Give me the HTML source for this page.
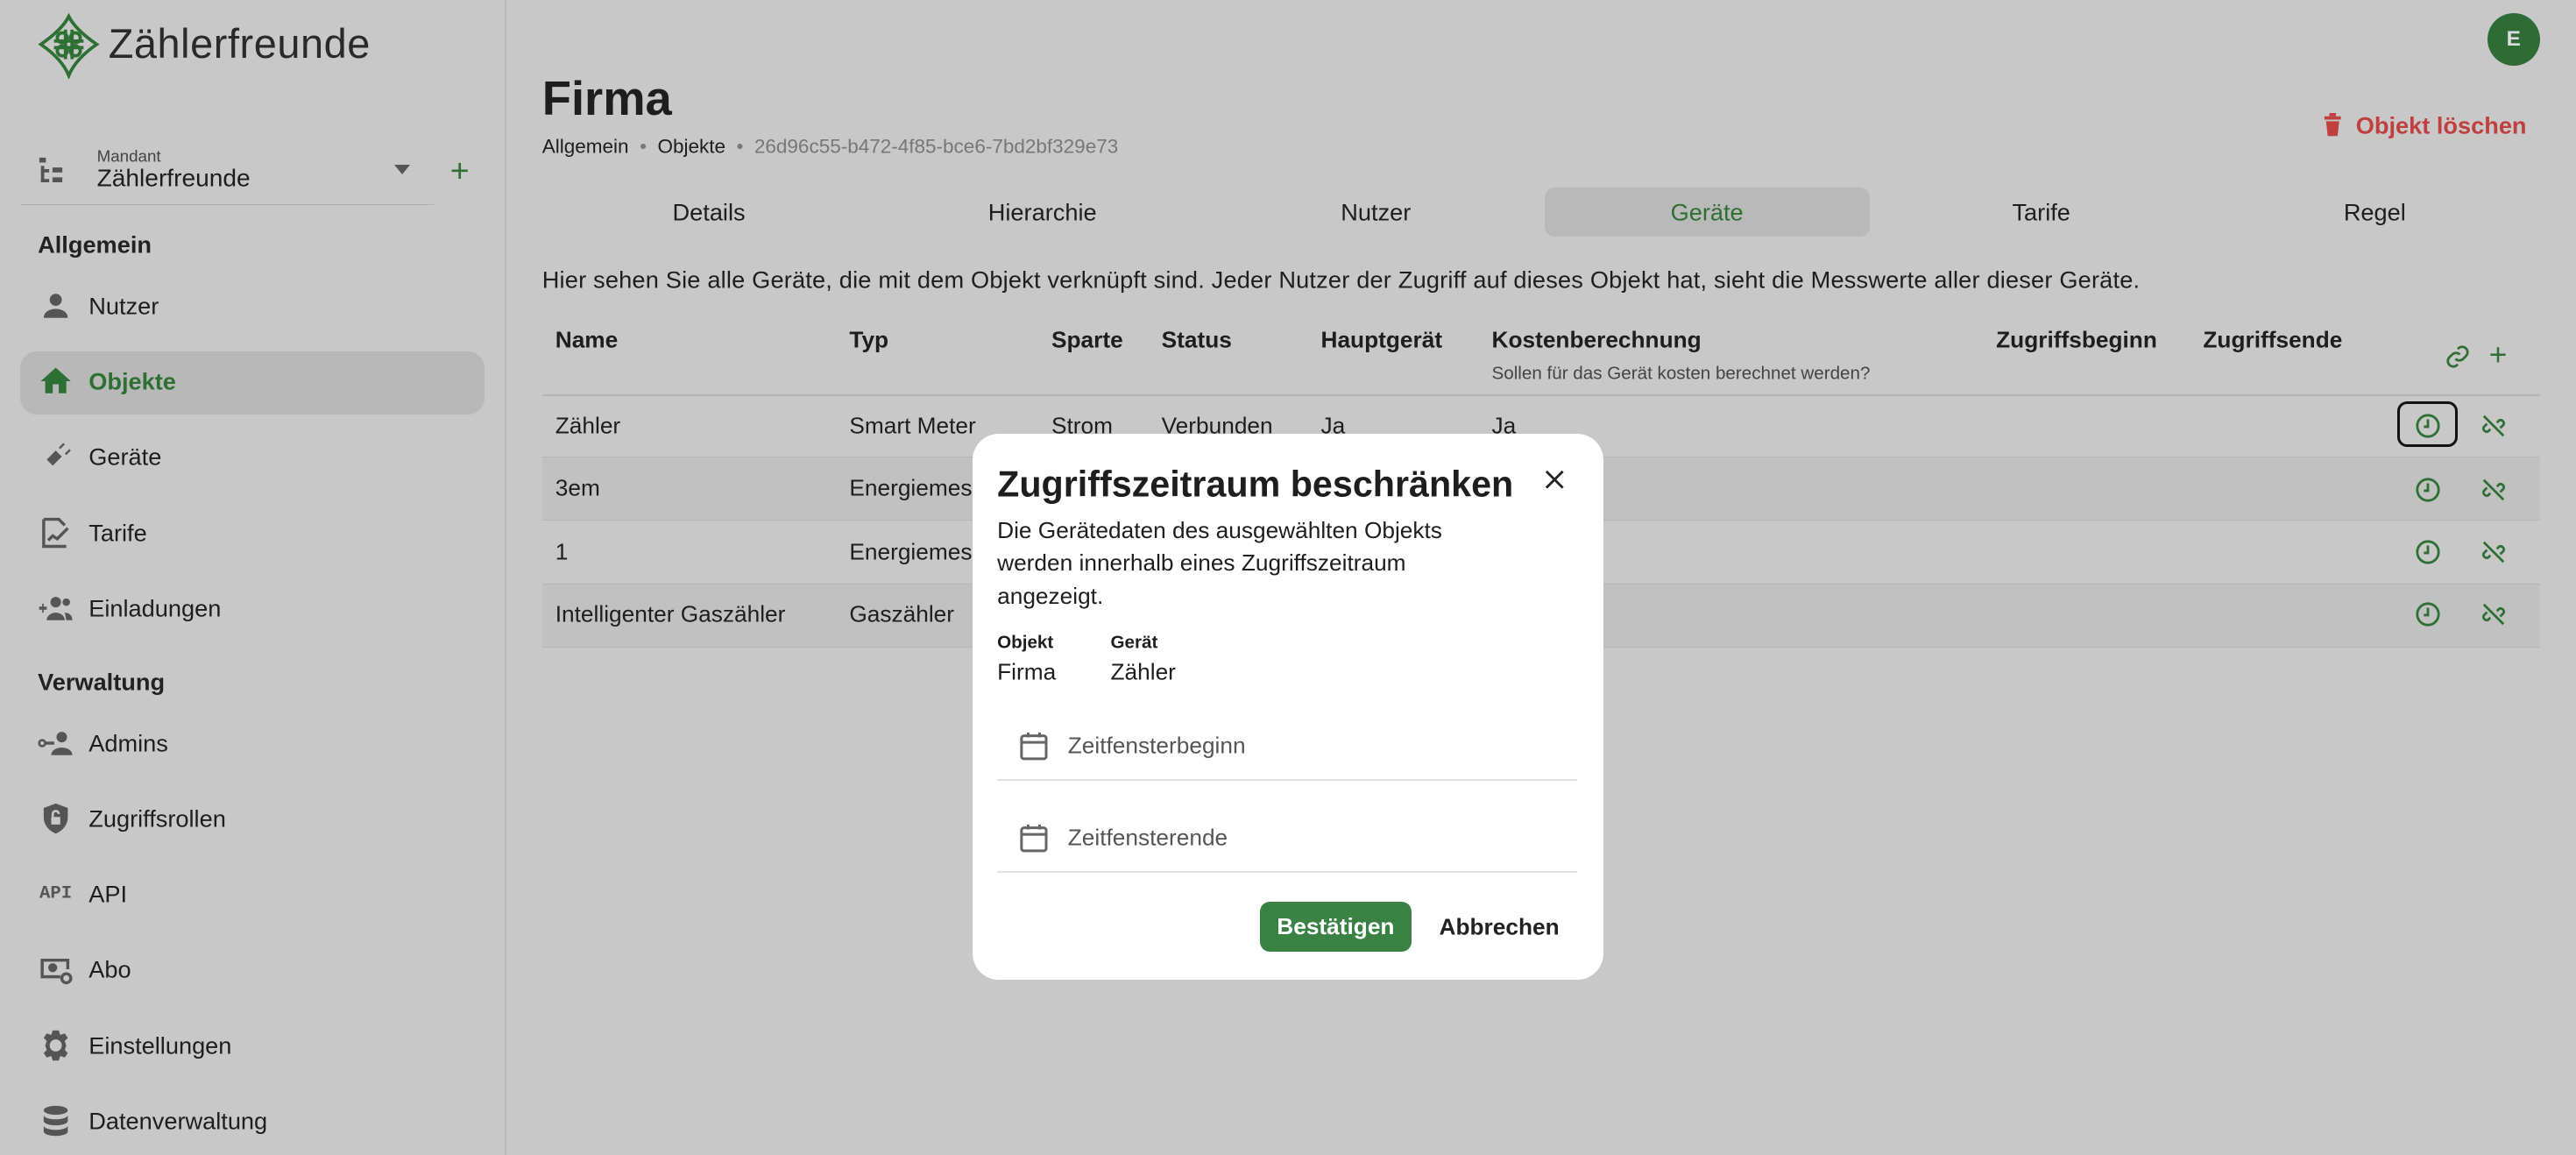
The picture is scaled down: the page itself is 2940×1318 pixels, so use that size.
<!DOCTYPE html>
<html><head><meta charset="utf-8"><style>
html,body{margin:0;padding:0;width:2940px;height:1318px;overflow:hidden;background:#c8c8c8}
#w{position:absolute;left:0;top:0;width:1568px;height:703px;zoom:1.875;font-family:"Liberation Sans",sans-serif;color:#1e1e1e;background:#c8c8c8}
.a{position:absolute;white-space:nowrap}
.t{position:absolute;white-space:nowrap;line-height:20px;transform:translateY(-10px)}
.nav{font-size:14.5px;left:54px}
.ic{position:absolute;left:23px;width:22px;height:22px;transform:translateY(-11px)}
.th{font-weight:bold;font-size:14px}
.td{font-size:14px}
</style></head><body><div id="w">
<!-- sidebar -->
<div class="a" style="left:307px;top:0;width:1px;height:703px;background:#b8b8b8"></div>
<svg class="a" style="left:22px;top:8px" width="40" height="40" viewBox="0 0 40 40" fill="none" stroke="#2e7034" stroke-width="2"><path d="M20 2 Q24 10 37 19 Q24 28 20 38 Q16 28 3 19 Q16 10 20 2Z"/><circle cx="16" cy="15" r="3"/><circle cx="24" cy="15" r="3"/><circle cx="16" cy="23" r="3"/><circle cx="24" cy="23" r="3"/><path d="M18 10V28M22 10V28M11 17H29M11 21H29"/></svg>
<div class="t" style="left:66px;top:27px;font-size:25px;line-height:34px;transform:translateY(-17px);color:#2a2a2a;font-weight:300;letter-spacing:0.3px">Zählerfreunde</div>
<svg class="a" style="left:23px;top:95px" width="20" height="18" viewBox="0 0 20 18" fill="#555"><rect x="1" y="1" width="4" height="3"/><rect x="2" y="6" width="2" height="10"/><rect x="2" y="8" width="5" height="2"/><rect x="2" y="14" width="5" height="2"/><rect x="9" y="7" width="6" height="3"/><rect x="9" y="13" width="6" height="3"/></svg>
<div class="t" style="left:59px;top:95px;font-size:10px;color:#444">Mandant</div>
<div class="t" style="left:59px;top:108px;font-size:15px">Zählerfreunde</div>
<div class="a" style="left:240px;top:100px;width:0;height:0;border-left:5px solid transparent;border-right:5px solid transparent;border-top:6px solid #555"></div>
<div class="t" style="left:274px;top:104px;font-size:20px;color:#2e7034">+</div>
<div class="a" style="left:12px;top:124px;width:252px;height:1px;background:#b0b0b0"></div>
<div class="t" style="left:23px;top:149px;font-size:14.5px;font-weight:bold;color:#222">Allgemein</div>
<svg class="ic" style="top:186px" viewBox="0 0 24 24" fill="#555"><circle cx="12" cy="8" r="4"/><path d="M4 20c0-4 4-6 8-6s8 2 8 6z"/></svg>
<div class="t nav" style="top:186px">Nutzer</div>
<div class="a" style="left:12px;top:214px;width:283px;height:38px;background:#b8b8b8;border-radius:10px"></div>
<svg class="ic" style="top:232px" viewBox="0 0 24 24" fill="#2e7034"><path d="M10 20v-6h4v6h5v-8h3L12 3 2 12h3v8z"/></svg>
<div class="t nav" style="top:232px;color:#2e7034;font-weight:bold">Objekte</div>
<svg class="ic" style="top:278px" viewBox="0 0 24 24" fill="#555"><path d="M3 21l5-5-2-2 6-6 4 4-6 6-2-2-5 5z M14 6l3-3 1 1-3 3z M18 10l3-3 1 1-3 3z"/></svg>
<div class="t nav" style="top:278px">Geräte</div>
<svg class="ic" style="top:324px" viewBox="0 0 24 24" fill="none" stroke="#555" stroke-width="2"><path d="M4 3h10l4 4M4 3v18h15"/><path d="M7 17l3-3 3 2 7-7" /></svg>
<div class="t nav" style="top:324px">Tarife</div>
<svg class="ic" style="top:370px" viewBox="0 0 24 24" fill="#555"><path d="M1 11h5v2H1zM3 9h1v6H3z"/><circle cx="12" cy="8" r="3.5"/><circle cx="19" cy="8" r="2.5"/><path d="M6 20c0-3 3-5 6-5s6 2 6 5zM18 15c2 0 5 1 5 5h-4z"/></svg>
<div class="t nav" style="top:370px">Einladungen</div>
<div class="t" style="left:23px;top:415px;font-size:14.5px;font-weight:bold;color:#222">Verwaltung</div>
<svg class="ic" style="top:452px" viewBox="0 0 24 24" fill="#555"><circle cx="3" cy="12" r="2" fill="none" stroke="#555" stroke-width="1.5"/><path d="M5 11h6v2H5z"/><circle cx="16" cy="8" r="3.5"/><path d="M9 20c0-3 3-5 7-5s7 2 7 5z"/></svg>
<div class="t nav" style="top:452px">Admins</div>
<svg class="ic" style="top:498px" viewBox="0 0 24 24" fill="#555"><path d="M12 2l8 3v6c0 5-3 9-8 11-5-2-8-6-8-11V5z"/><rect x="9" y="11" width="6" height="5" fill="#c8c8c8"/><path d="M10 11V9a2 2 0 0 1 4 0" fill="none" stroke="#c8c8c8" stroke-width="1.5"/></svg>
<div class="t nav" style="top:498px">Zugriffsrollen</div>
<div class="t" style="left:24px;top:544px;font-size:11px;font-weight:bold;color:#555;font-family:'Liberation Mono',monospace">API</div>
<div class="t nav" style="top:544px">API</div>
<svg class="ic" style="top:590px" viewBox="0 0 24 24" fill="none" stroke="#555" stroke-width="2"><path d="M15 17H3V6h17v6"/><circle cx="10" cy="11" r="2" fill="#555"/><circle cx="19" cy="18" r="3"/></svg>
<div class="t nav" style="top:590px">Abo</div>
<svg class="ic" style="top:636px" viewBox="0 0 24 24" fill="#555"><path d="M12 8a4 4 0 1 0 0 8 4 4 0 0 0 0-8z M10 2h4l1 3 3-1 2 3-2 2 1 3-1 3 2 2-2 3-3-1-1 3h-4l-1-3-3 1-2-3 2-2-1-3 1-3-2-2 2-3 3 1z" fill-rule="evenodd"/></svg>
<div class="t nav" style="top:636px">Einstellungen</div>
<svg class="ic" style="top:682px" viewBox="0 0 24 24" fill="#555"><ellipse cx="12" cy="5" rx="8" ry="3"/><path d="M4 8c0 2 4 3 8 3s8-1 8-3v4c0 2-4 3-8 3s-8-1-8-3zM4 15c0 2 4 3 8 3s8-1 8-3v4c0 2-4 3-8 3s-8-1-8-3z"/></svg>
<div class="t nav" style="top:682px">Datenverwaltung</div>

<!-- main -->
<div class="a" style="left:1514px;top:8px;width:32px;height:32px;border-radius:50%;background:#2e6b35;color:#ddd;font-weight:bold;font-size:13px;text-align:center;line-height:32px">E</div>
<div class="t" style="left:330px;top:60px;font-size:29px;font-weight:bold;line-height:34px;transform:translateY(-17px)">Firma</div>
<div class="t" style="left:330px;top:89px;font-size:12px">Allgemein <span style="color:#777">&nbsp;•&nbsp;</span> Objekte <span style="color:#777">&nbsp;•&nbsp; 26d96c55-b472-4f85-bce6-7bd2bf329e73</span></div>
<svg class="a" style="left:1414px;top:69px" width="12" height="14" viewBox="0 0 12 14" fill="#c0403f"><rect x="1" y="2" width="10" height="2"/><rect x="4" y="0" width="4" height="2"/><path d="M2 5h8l-1 9H3z"/></svg>
<div class="t" style="left:1434px;top:76px;font-size:14.5px;color:#c0403f;font-weight:bold">Objekt löschen</div>
<div class="a" style="left:940px;top:114px;width:198px;height:30px;background:#b9b9b9;border-radius:6px"></div>
<div class="t" style="left:330px;top:129px;width:203px;text-align:center;font-size:14.5px">Details</div>
<div class="t" style="left:533px;top:129px;width:203px;text-align:center;font-size:14.5px">Hierarchie</div>
<div class="t" style="left:736px;top:129px;width:203px;text-align:center;font-size:14.5px">Nutzer</div>
<div class="t" style="left:939px;top:129px;width:200px;text-align:center;font-size:14.5px;color:#2e7034">Geräte</div>
<div class="t" style="left:1141px;top:129px;width:203px;text-align:center;font-size:14.5px">Tarife</div>
<div class="t" style="left:1344px;top:129px;width:203px;text-align:center;font-size:14.5px">Regel</div>
<div class="t" style="left:330px;top:170px;font-size:14.5px;letter-spacing:0.1px">Hier sehen Sie alle Geräte, die mit dem Objekt verknüpft sind. Jeder Nutzer der Zugriff auf dieses Objekt hat, sieht die Messwerte aller dieser Geräte.</div>
<div class="t th" style="left:338px;top:207px">Name</div>
<div class="t th" style="left:517px;top:207px">Typ</div>
<div class="t th" style="left:640px;top:207px">Sparte</div>
<div class="t th" style="left:707px;top:207px">Status</div>
<div class="t th" style="left:804px;top:207px">Hauptgerät</div>
<div class="t th" style="left:908px;top:207px">Kostenberechnung</div>
<div class="t" style="left:908px;top:227px;font-size:11px;color:#444">Sollen für das Gerät kosten berechnet werden?</div>
<div class="t th" style="left:1215px;top:207px">Zugriffsbeginn</div>
<div class="t th" style="left:1341px;top:207px">Zugriffsende</div>
<svg class="a" style="left:1488px;top:209px" width="16" height="16" viewBox="0 0 24 24" fill="none" stroke="#2e7034" stroke-width="2.2"><path d="M10 14a5 5 0 0 0 7 0l3-3a5 5 0 0 0-7-7l-1 1M14 10a5 5 0 0 0-7 0l-3 3a5 5 0 0 0 7 7l1-1"/></svg>
<div class="t" style="left:1515px;top:216px;font-size:19px;color:#2e7034">+</div>
<div class="a" style="left:330px;top:240px;width:1216px;height:1px;background:#b5b5b5"></div>
<div class="a" style="left:330px;top:278px;width:1216px;height:39px;background:#c1c1c1;border-top:1px solid #b5b5b5;border-bottom:1px solid #b5b5b5;box-sizing:border-box"></div>
<div class="a" style="left:330px;top:355px;width:1216px;height:39px;background:#c1c1c1;border-top:1px solid #b5b5b5;border-bottom:1px solid #b5b5b5;box-sizing:border-box"></div>
<div class="t td" style="left:338px;top:259px">Zähler</div><div class="t td" style="left:517px;top:259px">Smart Meter</div><div class="t td" style="left:640px;top:259px">Strom</div><div class="t td" style="left:707px;top:259px">Verbunden</div><div class="t td" style="left:804px;top:259px">Ja</div><div class="t td" style="left:908px;top:259px">Ja</div>
<div class="t td" style="left:338px;top:297px">3em</div><div class="t td" style="left:517px;top:297px">Energiemess</div>
<div class="t td" style="left:338px;top:336px">1</div><div class="t td" style="left:517px;top:336px">Energiemess</div>
<div class="t td" style="left:338px;top:374px">Intelligenter Gaszähler</div><div class="t td" style="left:517px;top:374px">Gaszähler</div>
<div class="a" style="left:1459px;top:244px;width:37px;height:28px;border:2px solid #111;border-radius:6px;box-sizing:border-box"></div>
<svg class="a" style="left:1470px;top:251px" width="16" height="16" viewBox="0 0 16 16" fill="none" stroke="#2e7034" stroke-width="1.5"><circle cx="8" cy="8" r="6.5"/><path d="M8 4v4.5H5.5"/></svg>
<svg class="a" style="left:1470px;top:290px" width="16" height="16" viewBox="0 0 16 16" fill="none" stroke="#2e7034" stroke-width="1.5"><circle cx="8" cy="8" r="6.5"/><path d="M8 4v4.5H5.5"/></svg>
<svg class="a" style="left:1470px;top:328px" width="16" height="16" viewBox="0 0 16 16" fill="none" stroke="#2e7034" stroke-width="1.5"><circle cx="8" cy="8" r="6.5"/><path d="M8 4v4.5H5.5"/></svg>
<svg class="a" style="left:1470px;top:366px" width="16" height="16" viewBox="0 0 16 16" fill="none" stroke="#2e7034" stroke-width="1.5"><circle cx="8" cy="8" r="6.5"/><path d="M8 4v4.5H5.5"/></svg>
<svg class="a" style="left:1510px;top:251px" width="16" height="16" viewBox="0 0 24 24" fill="none" stroke="#2e7034" stroke-width="2.2"><path d="M9 15l-2 2a3 3 0 0 1-4-4l3-3M15 9l2-2a3 3 0 0 1 4 4l-3 3M3 3l18 18"/></svg>
<svg class="a" style="left:1510px;top:290px" width="16" height="16" viewBox="0 0 24 24" fill="none" stroke="#2e7034" stroke-width="2.2"><path d="M9 15l-2 2a3 3 0 0 1-4-4l3-3M15 9l2-2a3 3 0 0 1 4 4l-3 3M3 3l18 18"/></svg>
<svg class="a" style="left:1510px;top:328px" width="16" height="16" viewBox="0 0 24 24" fill="none" stroke="#2e7034" stroke-width="2.2"><path d="M9 15l-2 2a3 3 0 0 1-4-4l3-3M15 9l2-2a3 3 0 0 1 4 4l-3 3M3 3l18 18"/></svg>
<svg class="a" style="left:1510px;top:366px" width="16" height="16" viewBox="0 0 24 24" fill="none" stroke="#2e7034" stroke-width="2.2"><path d="M9 15l-2 2a3 3 0 0 1-4-4l3-3M15 9l2-2a3 3 0 0 1 4 4l-3 3M3 3l18 18"/></svg>

<!-- dialog -->
<div class="a" style="left:592px;top:264px;width:384px;height:332px;background:#fff;border-radius:16px"></div>
<div class="t" style="left:607px;top:295px;font-size:22px;font-weight:bold;line-height:26px;transform:translateY(-13px);color:#1e1e1e">Zugriffszeitraum beschränken</div>
<svg class="a" style="left:940px;top:286px" width="12" height="12" viewBox="0 0 12 12" stroke="#222" stroke-width="1.5"><path d="M1 1l10 10M11 1L1 11"/></svg>
<div class="a" style="left:607px;top:313px;font-size:14px;line-height:20px;width:285px;white-space:normal">Die Gerätedaten des ausgewählten Objekts werden innerhalb eines Zugriffszeitraum angezeigt.</div>
<div class="t" style="left:607px;top:391px;font-size:11px;font-weight:bold">Objekt</div>
<div class="t" style="left:676px;top:391px;font-size:11px;font-weight:bold">Gerät</div>
<div class="t" style="left:607px;top:409px;font-size:14px">Firma</div>
<div class="t" style="left:676px;top:409px;font-size:14px">Zähler</div>
<svg class="a" style="left:621px;top:445px" width="17" height="18" viewBox="0 0 17 18" fill="none" stroke="#666" stroke-width="1.6"><rect x="1" y="3" width="15" height="14" rx="1.5"/><path d="M1 7h15M5 1v3M12 1v3"/></svg>
<div class="t" style="left:650px;top:454px;font-size:14px;color:#555">Zeitfensterbeginn</div>
<div class="a" style="left:607px;top:474px;width:353px;height:1px;background:#e2e2e2"></div>
<svg class="a" style="left:621px;top:501px" width="17" height="18" viewBox="0 0 17 18" fill="none" stroke="#666" stroke-width="1.6"><rect x="1" y="3" width="15" height="14" rx="1.5"/><path d="M1 7h15M5 1v3M12 1v3"/></svg>
<div class="t" style="left:650px;top:510px;font-size:14px;color:#555">Zeitfensterende</div>
<div class="a" style="left:607px;top:530px;width:353px;height:1px;background:#e2e2e2"></div>
<div class="a" style="left:767px;top:549px;width:92px;height:30px;background:#3a8243;border-radius:6px;color:#fff;font-weight:bold;font-size:14px;text-align:center;line-height:30px">Bestätigen</div>
<div class="t" style="left:876px;top:564px;font-size:14px;font-weight:bold;color:#222">Abbrechen</div>
</div></body></html>
